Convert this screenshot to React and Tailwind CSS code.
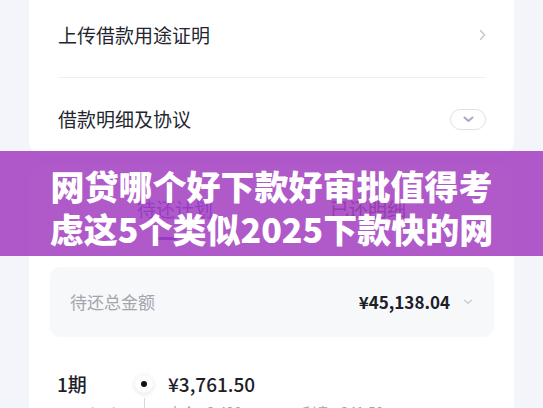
import React from 'react';

const cjk = "font-['Noto_Sans_CJK_SC',sans-serif]";

const ChevronRight = () => (
  <svg width="7" height="12" viewBox="0 0 7 12" fill="none">
    <path d="M1.5 1.5L5.5 6L1.5 10.5" stroke="#c5c7d0" strokeWidth="1.5" strokeLinecap="round" strokeLinejoin="round" />
  </svg>
);

const ChevronDown = ({ color = '#a7aac0', w = 11, h = 7, sw = 2 }) => (
  <svg width={w} height={h} viewBox="0 0 11 7" fill="none">
    <path d="M1.5 1.5L5.5 5L9.5 1.5" stroke={color} strokeWidth={sw} strokeLinecap="round" strokeLinejoin="round" />
  </svg>
);

const App = () => {
  return (
    <div className={`relative w-[543px] h-[408px] overflow-hidden bg-[#f3f5fb] ${cjk}`}>
      <div className="px-[29px] flex flex-col">
        {/* top card */}
        <div className="bg-white rounded-b-[14px] px-[28px] pl-[29px]">
          <div className="h-[77px] pb-[7px] flex items-center justify-between">
            <span className="text-[19px] leading-[26px] text-[#23262f]">上传借款用途证明</span>
            <ChevronRight />
          </div>
          <div className="h-px bg-[#eeeff3]" />
          <div className="h-[77px] pt-[5px] flex items-center justify-between">
            <span className="text-[19px] leading-[26px] text-[#23262f]">借款明细及协议</span>
            <div className="w-[36px] h-[21px] rounded-full border border-[#dedfe8] flex items-center justify-center">
              <ChevronDown />
            </div>
          </div>
        </div>

        {/* repayment card */}
        <div className="mt-[10px] bg-white rounded-[14px] pt-[32px] h-[300px]">
          <div className="flex justify-center gap-[117px]">
            <div className="flex flex-col">
              <span className="text-[19px] leading-[24px] text-[#3b36e0] whitespace-nowrap">待还计划</span>
              <div className="mt-[16px] ml-[17px] w-[23px] h-[3px] rounded-full bg-[#3b36e0]" />
            </div>
            <span className="text-[19px] leading-[24px] text-[#333333] whitespace-nowrap">已还明细</span>
          </div>

          <div className="mt-[27px] mx-[20px] ml-[21px] h-[70px] rounded-[10px] bg-[#f7f8fa] flex items-center pl-[20px] pr-[21px]">
            <span className="text-[17px] text-[#a3a5ad]">待还总金额</span>
            <span className="ml-auto text-[17px] font-bold text-[#1d2029]">¥45,138.04</span>
            <span className="ml-[13px]">
              <ChevronDown color="#c9cbd3" w={10} h={6} sw={1.5} />
            </span>
          </div>

          <div className="mt-[33px] pl-[28px] grid grid-cols-[63px_18px_auto] gap-x-[15px]">
            <span className="text-[19px] leading-[28px] font-medium text-[#1d2029]">1期</span>
            <div className="h-[28px] flex items-center justify-center">
              <div className="w-[18px] h-[18px] rounded-full bg-white shadow-[0_1px_5px_rgba(30,40,80,0.15)] flex items-center justify-center">
                <div className="w-[6px] h-[6px] rounded-full bg-[#111]" />
              </div>
            </div>
            <span className="text-[19px] leading-[28px] font-medium text-[#1d2029]">¥3,761.50</span>

            <span className="mt-[4px] text-[14px] leading-[20px] text-[#a3a5ad] whitespace-nowrap">2024/09/26</span>
            <div className="flex justify-center">
              <div className="w-px h-[30px] bg-[#d6d8de]" />
            </div>
            <div className="mt-[4px] flex gap-[60px] text-[14px] leading-[20px] text-[#a3a5ad] whitespace-nowrap">
              <span>本金 ¥3,420</span>
              <span>利息 ¥341.50</span>
            </div>
          </div>
        </div>
      </div>

      {/* title banner */}
      <div className="absolute left-0 right-0 top-[151px] h-[105px] bg-[rgba(163,62,192,0.86)] flex flex-col items-center pt-[13px]">
        <div className="text-[34px] leading-[43px] font-black text-white whitespace-nowrap">网贷哪个好下款好审批值得考</div>
        <div className="text-[34px] leading-[43px] font-black text-white whitespace-nowrap">虑这5个类似2025下款快的网</div>
      </div>
    </div>
  );
};

export default App;
